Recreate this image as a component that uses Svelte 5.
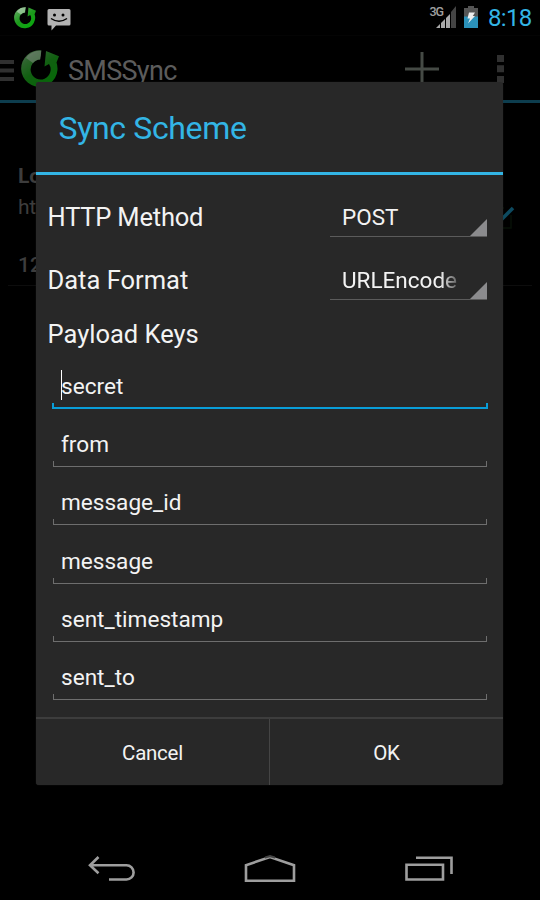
<script>
  const selects = [
    { label: 'HTTP Method', value: 'POST', cls: 'method' },
    { label: 'Data Format', value: 'URLEncode', cls: 'format' }
  ];
  const keys = ['secret', 'from', 'message_id', 'message', 'sent_timestamp', 'sent_to'];
</script>

{#snippet logo(size)}
  <svg width={size} height={size} viewBox="0 0 38 38">
    <defs>
      <linearGradient id="ring" x1="0" y1="0" x2=".75" y2="1">
        <stop offset="0" stop-color="#9fbd9f" />
        <stop offset=".25" stop-color="#4aa34a" />
        <stop offset=".55" stop-color="#1c9a1c" />
        <stop offset="1" stop-color="#08a90c" />
      </linearGradient>
    </defs>
    <path fill="url(#ring)" d="M20.500.5A18.2 18.2 0 1 0 35.500 12.500L38 6.300 25 1l-1.500 15.500 4.500-2.500A10 10 0 1 1 19 9.500z" />
    <path fill="#d8ded8" opacity=".5" d="M20.500.500Q10 .5 5 8l7 5q3-3.500 7.500-3.500z" />
    <path fill="#000" d="M20.700 0h2.500v10h-3.700z" />
  </svg>
{/snippet}

<div class="screen">
  <header class="status">
    <span class="sync">{@render logo(22)}</span>
    <svg class="sms" width="24" height="23" viewBox="0 0 24 23">
      <path fill="#b3b3b3" d="M2 0h20q1.500 0 1.500 1.500v13.500q0 1.500-1.500 1.500H9l-4.500 5v-5H2q-1.500 0-1.500-1.500v-13.500Q.5 0 2 0z" />
      <circle cx="7.500" cy="6" r="1.500" /><circle cx="16" cy="6" r="1.500" />
      <path d="M4 9.500q8 5.500 16 0" fill="none" stroke="#000" stroke-width="1.500" />
    </svg>
    <span class="net">3G</span>
    <svg class="signal" width="21" height="22" viewBox="0 0 21 22">
      <path fill="#aaa" d="M0 22L4 18v4zM5 17l4-4v9H5zM10 12l4-4v14h-4z" />
      <path fill="#444" d="M15 6l5-6v22h-5z" />
    </svg>
    <svg class="battery" width="14" height="22" viewBox="0 0 14 22">
      <path fill="#555" d="M4 0h6v2h4v9H0V2h4z" />
      <path fill="#2b91b9" d="M0 10.500h14V22H0z" />
      <path fill="#eee" d="M5 6.500h6L8.800 10H11L4 17.500l2-5H3.500z" />
    </svg>
    <time>8:18</time>
  </header>

  <div class="bar">
    <svg class="drawer" width="14" height="21" viewBox="0 0 14 21">
      <path fill="#303030" d="M0 0h14v4H0zM0 8.500h14v4H0zM0 17h14v4H0z" />
    </svg>
    <span class="brand">{@render logo(38)}</span>
    <h1>SMSSync</h1>
    <svg class="add" width="34" height="34" viewBox="0 0 34 34">
      <path fill="#454a45" d="M15.500 0h3v15.500H34v3H18.500V34h-3V18.500H0v-3h15.500z" />
    </svg>
    <svg class="more" width="7" height="28" viewBox="0 0 7 28">
      <path fill="#303030" d="M0 0h7v7H0zM0 10.300h7v7H0zM0 21h7v7H0z" />
    </svg>
  </div>

  <section class="list">
    <div class="texts">
      <strong>Lo</strong>
      <span>ht</span>
      <b>12</b>
    </div>
    <svg class="check" width="22" height="24" viewBox="0 0 22 24">
      <path d="M1 2h10M18 9v13H1" fill="none" stroke="#071007" stroke-width="1.500" />
      <path d="M8 14l12-12" stroke="#0d4a60" stroke-width="3.500" />
    </svg>
  </section>

  <nav>
    <svg width="47" height="26" viewBox="0 0 47 26">
      <path d="M10.500 1L2 9.300l8.500 8M2 9.300h36.500a7 7 0 0 1 0 14.200H21" fill="none" stroke="#9e9e9e" stroke-width="2.600" />
    </svg>
    <svg width="52" height="28" viewBox="0 0 52 28">
      <path d="M2 10.200L26 2l24 8.200v15.500H2z" fill="none" stroke="#9e9e9e" stroke-width="2.600" />
      <path d="M21 1.500L26 0l5 1.500v2l-5-1.200-5 1.200z" fill="#444" />
    </svg>
    <svg width="48" height="26" viewBox="0 0 48 26">
      <path d="M1.500 8.800h36.500v14.700H1.500zM11 1.700h35.500V18" fill="none" stroke="#9e9e9e" stroke-width="2.600" />
    </svg>
  </nav>

  <div class="dialog" role="dialog">
    <h2><span>Sync Scheme</span></h2>
    <div class="content">
      {#each selects as s}
        <div class="row">
          <label class={s.cls} for={s.cls}>{s.label}</label>
          <div class="spinner" id={s.cls}>
            <span class={s.cls}>{s.value}</span>
            <svg width="17" height="17" viewBox="0 0 17 17"><path fill="#8b8b8d" d="M17 0v17H0z" /></svg>
          </div>
        </div>
      {/each}
      <h3>Payload Keys</h3>
      {#each keys as key, i}
        <div class="field" class:focus={i === 0}>
          {#if i === 0}<i class="caret"></i>{/if}
          <span>{key}</span>
        </div>
      {/each}
    </div>
    <footer>
      <button class="cancel">Cancel</button>
      <button class="ok">OK</button>
    </footer>
  </div>
</div>

<style>
  :global(body) { background: #000; }
  .screen { position: relative; width: 540px; height: 900px; overflow: hidden; background: #000; font-family: Roboto, "Liberation Sans", sans-serif; display: flex; flex-direction: column; }
  svg { display: block; flex: none; }
  h1, h2, h3 { margin: 0; font-weight: 400; }
  .status { height: 36px; box-sizing: border-box; border-bottom: 1px solid #040404; display: flex; align-items: flex-start; padding: 0 8px 0 14px; }
  .sync { margin-top: 6.500px; }
  .sms { margin: 9px 0 0 11px; }
  .net { margin: 5px 0 0 auto; font-size: 12.500px; line-height: 14px; color: #a0a0a0; letter-spacing: -1px; font-weight: 500; }
  .signal { margin: 6px 0 0 -7px; }
  .battery { margin: 6px 0 0 7px; }
  time { color: #33b5e5; font-size: 24px; line-height: 37px; margin-left: 10px; width: 44px; letter-spacing: -.7px; }
  .bar { height: 67px; box-sizing: border-box; border-bottom: 3px solid #0d3d4e; display: flex; align-items: flex-start; padding-right: 36px; }
  .drawer { margin-top: 24px; }
  .brand { margin: 14px 0 0 7px; opacity: .62; }
  h1 { font-size: 27px; line-height: 32px; color: #5c5c5c; margin: 19px 0 0 9px; letter-spacing: -.7px; }
  .add { margin: 16px 0 0 auto; }
  .more { margin: 19px 0 0 58px; }
  .list { height: 183px; box-sizing: border-box; margin: 0 8px; padding: 61px 17px 0 10px; border-bottom: 1px solid #0d0d0d; display: flex; justify-content: space-between; color: #3d3d3d; font-size: 21px; }
  .texts { display: flex; flex-direction: column; }
  .texts strong { line-height: 24px; }
  .texts span { line-height: 24px; margin-top: 7px; letter-spacing: -.3px; }
  .texts b { line-height: 24px; margin-top: 34px; font-weight: 500; }
  .check { margin-top: 42px; }
  nav { margin-top: auto; height: 62px; display: flex; align-items: center; justify-content: space-between; padding: 0 87px 0 88px; }

  .dialog { position: absolute; left: 36px; top: 82px; width: 467px; height: 703px; background: #282828; border-radius: 3px; box-shadow: 0 0 1px #333; display: flex; flex-direction: column; }
  h2 { height: 93px; box-sizing: border-box; border-bottom: 3px solid #33b5e5; padding: 0 0 2px 22.500px; font-size: 32px; line-height: 92px; letter-spacing: -.35px; color: #33b5e5; }
  .content { flex: 1; padding: 0 16px 0 11.500px; color: #f3f3f3; }
  .row { height: 62.500px; display: flex; justify-content: space-between; }
  label { font-size: 25.500px; line-height: 30px; margin-top: 27.500px; white-space: nowrap; }
  label.method { letter-spacing: -.2px; margin-top: 27px; }
  label.format { margin-top: 27px; }
  .spinner { width: 157px; height: 47px; margin-top: 14.600px; box-sizing: border-box; border-bottom: 1px solid #5b5b5b; display: flex; align-items: flex-end; justify-content: space-between; }
  .row:nth-child(2) .spinner { margin-top: 15.500px; }
  .spinner span { width: 117px; margin-left: 12px; white-space: nowrap; font-size: 22.500px; line-height: 38px; }
  .spinner .format { -webkit-mask-image: linear-gradient(90deg, #000 84%, transparent 104%); mask-image: linear-gradient(90deg, #000 84%, transparent 104%); }
  h3 { font-size: 25.500px; line-height: 30px; margin-top: 19px; }
  .field { position: relative; height: 58.350px; box-sizing: border-box; margin: 0 0 0 5.500px; padding: 18.300px 0 0 8px; font-size: 22.600px; line-height: 26px; }
  h3 + .field { margin-top: 6.400px; }
  .field::after { content: ""; position: absolute; left: 0; right: 0; bottom: 5px; height: 6px; box-sizing: border-box; border: 1px solid #6e6e6e; border-top: 0; }
  .focus::after { border: 2px solid #099dd8; border-top: 0; left: -1px; right: -1px; bottom: 5px; }
  .caret { position: absolute; left: 8px; top: 15px; width: 1px; height: 30px; background: #fff; }
  footer { height: 68px; box-sizing: border-box; border-top: 2px solid #3d3d3d; display: flex; }
  button { flex: 1; padding: 0; border: 0; background: none; color: #f3f3f3; font: 20.500px/68px Roboto, "Liberation Sans", sans-serif; letter-spacing: -.25px; }
  button + button { border-left: 1px solid #454545; }
</style>
